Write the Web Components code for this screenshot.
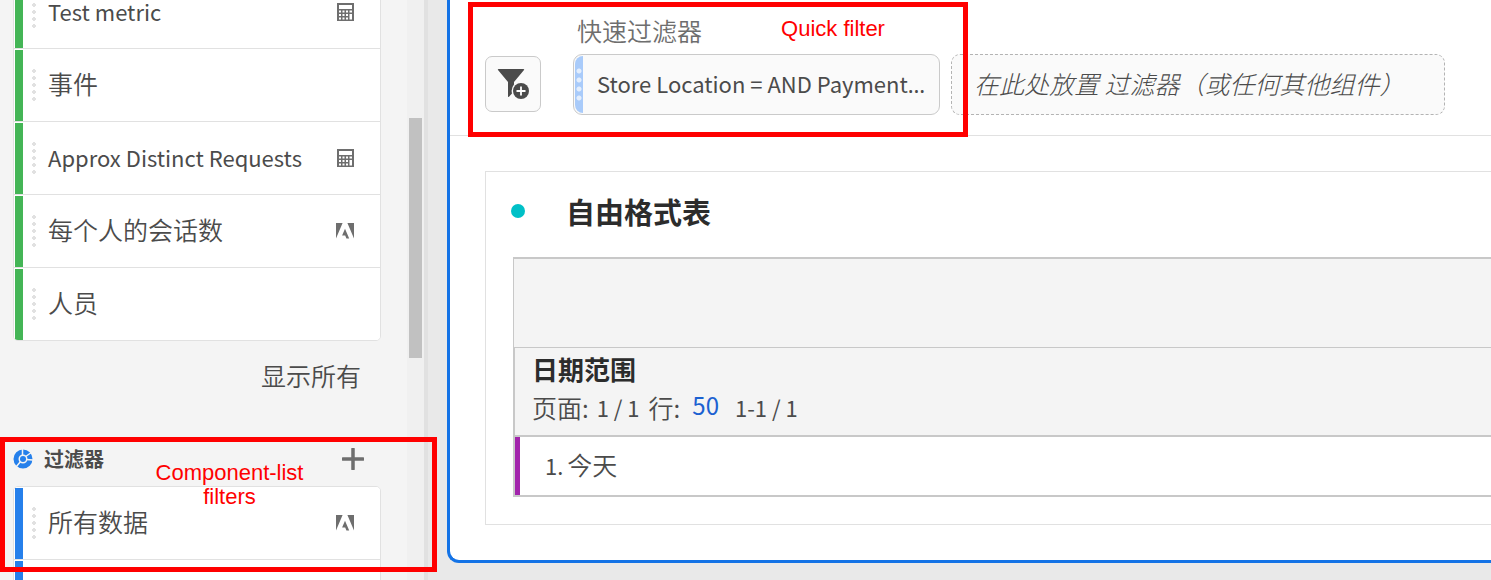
<!DOCTYPE html>
<html lang="zh-CN">
<head>
<meta charset="utf-8">
<title>Workspace</title>
<style>
  body { margin: 0; background: #e9e9e9; color: #4b4b4b; font: 22px/32px "Noto Sans CJK SC", sans-serif; }
</style>
</head>
<body>
<workspace-app></workspace-app>
<script>
const define = (name, html) => {
  const template = document.createElement('template');
  template.innerHTML = html;
  customElements.define(name, class extends HTMLElement {
    constructor() {
      super();
      this.attachShadow({ mode: 'open' }).append(template.content.cloneNode(true));
    }
  });
};

define('calc-icon', `
<style>:host { display: block; width: 17px; height: 18px } svg { display: block }</style>
<svg width="17" height="18" viewBox="0 0 17 18" fill="#6e6e6e" aria-hidden="true">
  <path fill-rule="evenodd" d="M0 0h17v18H0zM2 2v4h13V2zM2 7.500v2h2v-2zM5.500 7.500v2h2v-2zM9 7.500v2h2v-2zM12.500 7.500v2H15v-2zM2 11v2h2v-2zM5.500 11v2h2v-2zM9 11v2h2v-2zM12.500 11v5.500H15V11zM2 14.500v2h2v-2zM5.500 14.500v2h2v-2zM9 14.500v2h2v-2z"/>
</svg>`);

define('adobe-icon', `
<style>:host { display: block; width: 18px; height: 16px } svg { display: block }</style>
<svg width="18" height="16" viewBox="0 0 18 16" fill="#6e6e6e" aria-hidden="true">
  <path d="M0 0h6.600L0 15.500zM11.400 0H18v15.500zM9 5.700l4.200 9.800h-2.800l-1.200-3.100H6.100z"/>
</svg>`);

define('component-item', `
<style>
  :host { display: flex; align-items: center; box-sizing: border-box; height: 73px; padding-right: 26px; border-bottom: 1px solid #e1e1e1; background: #fff; line-height: 24px }
  :host(:last-of-type) { border-bottom: 0; height: 72px }
  .bar { align-self: stretch; width: 8px; margin: 1px 9px 0 1px; background: var(--bar, #44b556) }
  .grip { width: 4px; height: 32px; margin-right: 12px; background: radial-gradient(circle at 2px 2px, #e1e1e1 2px, transparent 2px) 0 0 / 4px 7px }
  .label { flex: 1; padding-bottom: 4px; white-space: nowrap }
</style>
<span class="bar"></span><span class="grip"></span><span class="label"><slot></slot></span><slot name="icon"></slot>`);

define('component-list', `
<style>:host { display: block; border: 1px solid #e1e1e1; border-radius: 5px; overflow: hidden; background: #fff }</style>
<slot></slot>`);

define('side-panel', `
<style>
  :host { display: flex; box-sizing: border-box; width: 428px; height: 100vh; overflow: hidden; background: #f4f4f4; border-right: 4px solid #e1e1e1 }
  .content { flex: 1; padding: 0 26px 0 13px }
  .metrics { margin-top: -25px }
  component-list { font-size: 25px; font-weight: 350 }
  .latin { font-size: 22px; font-weight: 400 }
  .more { display: flex; justify-content: flex-end; padding: 18px 20px 0 0 }
  button { padding: 0; border: 0; background: none; color: inherit; font: inherit; display: block }
  .more button { font-size: 25px; font-weight: 350; line-height: 32px }
  header { display: flex; align-items: center; height: 32px; margin-top: 52px; padding-right: 17px }
  h2 { flex: 1; margin: 0 0 0 11px; font-size: 20px; line-height: 28px; font-weight: 700 }
  svg { display: block }
  .filters { margin-top: 11px; --bar: #2680eb }
  .track { width: 17px; background: #f0f0f0 }
  .thumb { width: 13px; height: 240px; margin: 118px 2px 0; background: #c1c1c1 }
</style>
<div class="content">
  <component-list class="metrics">
    <component-item><span class="latin">Test metric</span><calc-icon slot="icon"></calc-icon></component-item>
    <component-item>事件</component-item>
    <component-item><span class="latin">Approx Distinct Requests</span><calc-icon slot="icon"></calc-icon></component-item>
    <component-item>每个人的会话数<adobe-icon slot="icon"></adobe-icon></component-item>
    <component-item>人员</component-item>
  </component-list>
  <div class="more"><button>显示所有</button></div>
  <header>
    <svg width="20" height="20" viewBox="0 0 20 20" aria-hidden="true">
      <circle cx="10" cy="10" r="7" fill="none" stroke="#2680eb" stroke-width="5"/>
      <path d="M9.500 7V0M12 8l7-5M13 10.500l7 .5M8 12l-5 6" fill="none" stroke="#f4f4f4" stroke-width="1.500"/>
      <circle cx="10" cy="10" r="3" fill="#2680eb"/>
    </svg>
    <h2>过滤器</h2>
    <button aria-label="添加"><svg width="22" height="22" viewBox="0 0 22 22" aria-hidden="true"><path d="M11 1v20M1 11h20" stroke="#6e6e6e" stroke-width="3.500" stroke-linecap="round"/></svg></button>
  </header>
  <component-list class="filters">
    <component-item>所有数据<adobe-icon slot="icon"></adobe-icon></component-item>
    <component-item></component-item>
  </component-list>
</div>
<div class="track"><div class="thumb"></div></div>`);

define('filter-chip', `
<style>
  :host { display: flex; align-items: center; box-sizing: border-box; width: 367px; height: 61px; border: 1px solid #cacaca; border-radius: 9px; background: #fafafa; overflow: hidden }
  .tab { flex: none; display: flex; align-items: center; justify-content: center; align-self: stretch; width: 8px; margin: 1px 14px 1px 1px; border-radius: 8px 0 0 8px; background: #a9cbfa }
  .dots { width: 6px; height: 33px; background: radial-gradient(circle at 3px 3px, #e3eefd 2px, transparent 3px) 0 0 / 6px 9px }
  .label { padding-bottom: 3px; white-space: nowrap }
</style>
<span class="tab"><span class="dots"></span></span><span class="label"><slot></slot></span>`);

define('drop-zone', `
<style>
  :host { display: flex; align-items: center; box-sizing: border-box; width: 494px; height: 61px; padding: 0 0 3px 22px; border: 1px dashed #b3b3b3; border-radius: 9px; background: #fafafa; font-size: 25px; font-style: italic; font-weight: 300; white-space: nowrap }
</style>
<slot></slot>`);

define('quick-filters', `
<style>
  :host { display: flex; align-items: flex-end; height: 136px; box-sizing: border-box; padding: 0 0 20px 35px; border-bottom: 1px solid #e1e1e1 }
  button { display: grid; place-items: center; width: 56px; height: 56px; margin: 0 32px 3px 0; padding: 0; border: 1px solid #cacaca; border-radius: 7px; background: #fafafa }
  .group { margin-right: 11px }
  .title { display: block; margin: 0 0 8px 4px; font-size: 25px; font-weight: 350; line-height: 32px; color: #6e6e6e }
  .ellipsis { font-family: "Noto Sans", sans-serif }
</style>
<button aria-label="添加过滤器">
  <svg width="32" height="32" viewBox="0 0 32 32" aria-hidden="true">
    <path fill="#4b4b4b" d="M1.500 1h25q1.200 0 .5 1L17 14v2.500a10 10 0 0 0-2 9l-3 3.200q-1 .8-1-.5V14L1 2q-.6-1 .5-1z"/>
    <circle cx="24" cy="23" r="8" fill="#4b4b4b"/>
    <path d="M24 18.500v9M19.500 23h9" stroke="#fff" stroke-width="1.800"/>
  </svg>
</button>
<div class="group"><span class="title">快速过滤器</span><filter-chip>Store Location = AND Payment<span class="ellipsis">…</span></filter-chip></div>
<drop-zone>在此处放置 过滤器（或任何其他组件）</drop-zone>`);

define('freeform-table', `
<style>
  :host { display: block; margin: 35px 0 35px 35px; padding: 21px 0 27px 27px; border: 1px solid #e1e1e1; border-right: 0 }
  header { display: flex; align-items: center; height: 36px; margin-bottom: 28px; color: #2c2c2c }
  .dot { width: 14px; height: 14px; margin: 0 41px 0 -2px; border-radius: 50%; background: #00c0c7 }
  h1 { margin: 0; font-size: 29px; line-height: 36px; font-weight: 700 }
  table { width: 100%; border-collapse: separate; border-spacing: 0; border-left: 1px solid #c8c8c8 }
  th, td { box-sizing: border-box; padding: 0; text-align: left; font-weight: 400; vertical-align: middle }
  .blank { height: 90px; background: #f4f4f4; border: solid #c8c8c8; border-width: 2px 0 0 }
  .dim { height: 90px; padding: 0 17px 7px; background: #f4f4f4; border: solid #c8c8c8; border-width: 1px 0 2px 1px }
  .dim b { display: block; font-size: 26px; line-height: 38px; color: #2c2c2c }
  .pages { display: flex; align-items: center; height: 38px; line-height: 38px; font-size: 22px; white-space: pre }
  .cjk { font-size: 25px; font-weight: 350 }
  .count { margin: 0 9px 0 3px }
  a { margin: 0 16px 4px 12px; font-size: 24px; line-height: 32px; color: #1b61d1; text-decoration: none }
  .value { height: 60px; padding: 0 0 4px 30px; border-left: 1px solid #c8c8c8; border-bottom: 2px solid #c8c8c8; background: linear-gradient(#a224ac, #a224ac) 0 0 / 5px 100% no-repeat }
  .value .cjk { margin-left: 4px }
</style>
<header><span class="dot"></span><h1>自由格式表</h1></header>
<table>
  <thead>
    <tr><td class="blank"></td></tr>
    <tr><th class="dim" scope="col"><b>日期范围</b><div class="pages"><span class="cjk">页面:</span><span class="count"> 1 / 1</span><span class="cjk">行:</span><a href="#">50</a><span>1-1 / 1</span></div></th></tr>
  </thead>
  <tbody><tr><td class="value">1.<span class="cjk">今天</span></td></tr></tbody>
</table>`);

define('call-out', `
<style>
  :host { position: absolute; box-sizing: border-box; border: 5px solid #f00; pointer-events: none; color: #f00; font: 22px/24px "Liberation Sans", sans-serif; text-align: center }
</style>
<slot></slot>`);

define('workspace-app', `
<style>
  :host { display: flex; position: relative; height: 100vh; overflow: hidden }
  side-panel { flex: none }
  main { flex: 1; min-width: 0; overflow: hidden; padding-left: 19px }
  .panel { border: solid #1473e6; border-width: 0 0 3px 3px; border-radius: 0 0 0 12px; background: #fff; display: flow-root }
  .quick { left: 468px; top: 2px; width: 500px; height: 135px; padding: 10px 0 0 230px }
  .list { left: 0; top: 437px; width: 437px; height: 135px; padding: 19px 0 0 22px }
  call-out span { display: block }
</style>
<side-panel></side-panel>
<main><div class="panel"><quick-filters></quick-filters><freeform-table></freeform-table></div></main>
<call-out class="quick">Quick filter</call-out>
<call-out class="list"><span>Component-list</span><span>filters</span></call-out>`);
</script>
</body>
</html>
